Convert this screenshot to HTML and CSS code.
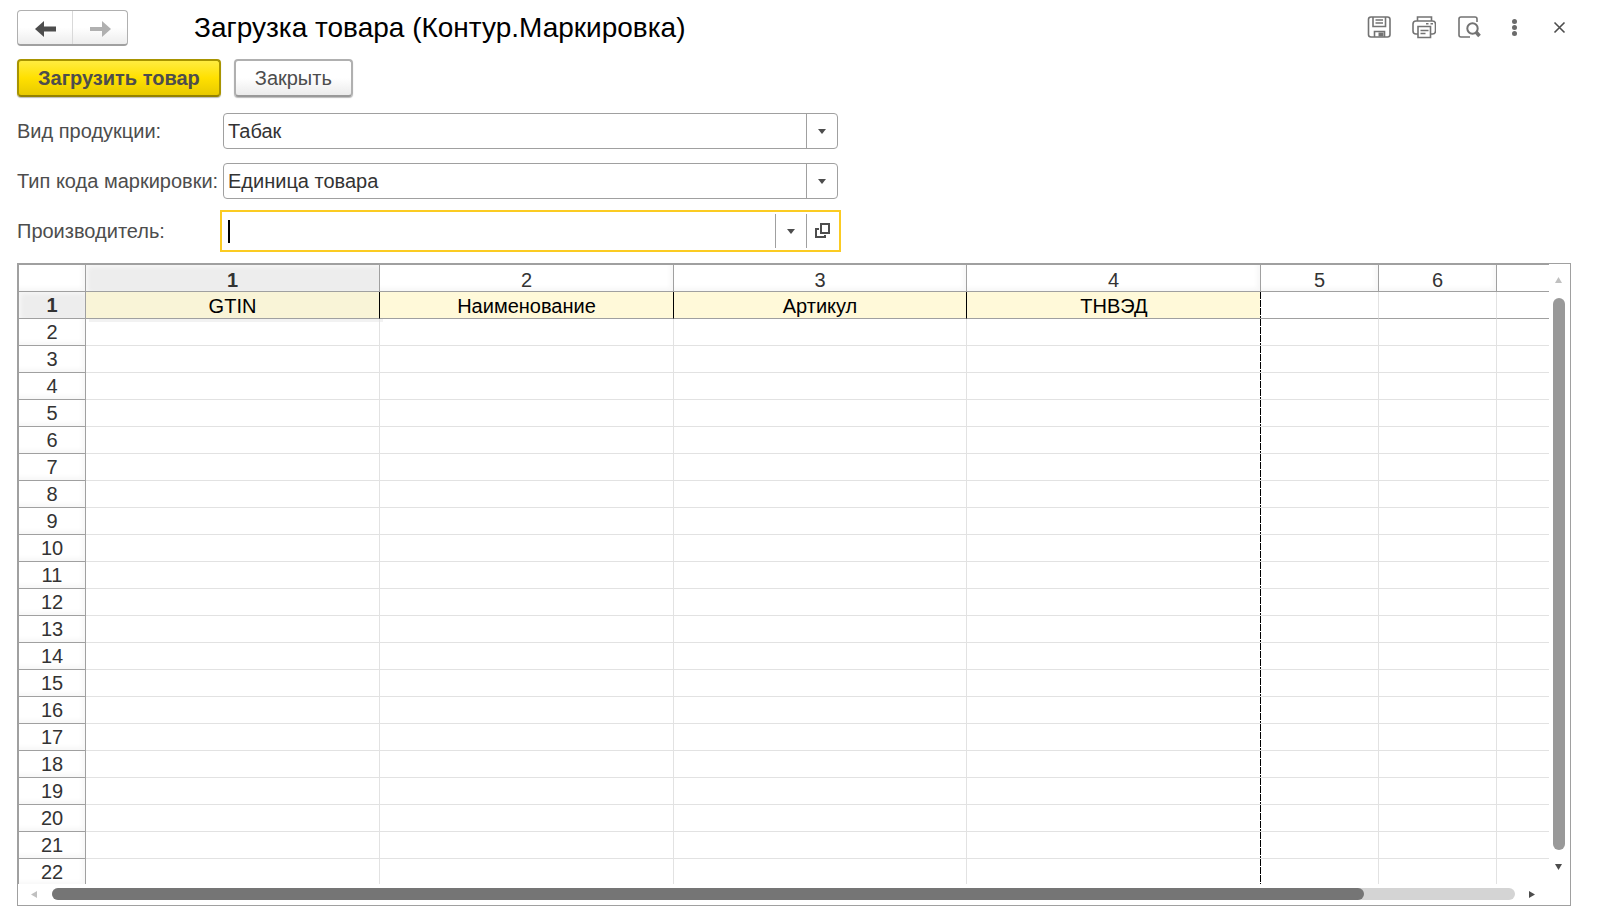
FILE: index.html
```html
<!DOCTYPE html>
<html lang="ru">
<head>
<meta charset="utf-8">
<title>Загрузка товара (Контур.Маркировка)</title>
<link rel="stylesheet" href="styles.css">
</head>
<body>
<main class="window">
  <header class="titlebar">
    <div class="nav">
      <button class="nav-btn" type="button" aria-label="Назад"><svg width="22" height="16" viewBox="0 0 22 16"><path d="M1 8 10 0V5.500H22V10.500H10V16Z" fill="#4d4d4d"/></svg></button>
      <button class="nav-btn" type="button" aria-label="Вперед" disabled><svg width="22" height="16" viewBox="0 0 22 16"><path d="M22 8 13 0V6H1V10H13V16Z" fill="#b0b0b0"/></svg></button>
    </div>
    <h1 class="title">Загрузка товара (Контур.Маркировка)</h1>
    <div class="tools">
      <button class="tool" type="button" aria-label="Сохранить"><svg width="24" height="24" viewBox="0 0 24 24" fill="none" stroke="#737373" stroke-width="1.600"><rect x="1.500" y="1" width="21.500" height="20" rx="2.500"/><path d="M6 1V10.500H18.500V1M8.500 4H16M8.500 7H16M7.500 21V15.500H17.500V21"/><path d="M11.500 16.500H16.500V20.500H11.500Z" fill="#737373" stroke="none"/></svg></button>
      <button class="tool" type="button" aria-label="Печать"><svg width="24" height="24" viewBox="0 0 24 24" fill="none" stroke="#737373" stroke-width="1.600"><path d="M5.500 5V1H19.500V5M5.500 18H4Q1 18 1 15V8Q1 5 4 5H20.500Q23.500 5 23.500 8V15Q23.500 18 20.500 18H19M6 10.500H18.500V21.500H6ZM8.500 14.500H16.500M8.500 17.500H13.500M14 7.700H16.500M18.500 7.700H21"/></svg></button>
      <button class="tool" type="button" aria-label="Просмотр"><svg width="24" height="24" viewBox="0 0 24 24" fill="none" stroke="#737373" stroke-width="1.600"><path d="M20 6V3Q20 1 18 1H4Q2 1 2 3V19Q2 21 4 21H13"/><circle cx="15.500" cy="12.500" r="5.200" stroke-width="2"/><path d="M19 16 22.500 20" stroke-width="3.500"/></svg></button>
      <button class="tool" type="button" aria-label="Ещё"><svg width="24" height="24" viewBox="0 0 24 24" fill="#6b6b6b"><circle cx="12.500" cy="5.500" r="2.500"/><circle cx="12.500" cy="11.500" r="2.500"/><circle cx="12.500" cy="17.500" r="2.500"/></svg></button>
      <button class="tool" type="button" aria-label="Закрыть окно"><svg width="24" height="24" viewBox="0 0 24 24" stroke="#4d4d4d" stroke-width="1.600"><path d="M7.500 6.500 17.500 16.500M17.500 6.500 7.500 16.500"/></svg></button>
    </div>
  </header>

  <div class="commands">
    <button class="btn btn-primary" type="button">Загрузить товар</button>
    <button class="btn" type="button">Закрыть</button>
  </div>

  <form class="fields">
    <label for="kind">Вид продукции:</label>
    <div class="field">
      <select id="kind"><option>Табак</option></select>
      <span class="drop"><svg width="8" height="5" viewBox="0 0 8 5"><path d="M0 0H8L4 5Z" fill="#4d4d4d"/></svg></span>
    </div>
    <label for="code">Тип кода маркировки:</label>
    <div class="field">
      <select id="code"><option>Единица товара</option></select>
      <span class="drop"><svg width="8" height="5" viewBox="0 0 8 5"><path d="M0 0H8L4 5Z" fill="#4d4d4d"/></svg></span>
    </div>
    <label for="maker">Производитель:</label>
    <div class="field field-active">
      <span class="caret"></span>
      <input id="maker" type="text">
      <button class="field-btn" type="button" aria-label="Выбрать"><svg width="8" height="5" viewBox="0 0 8 5"><path d="M0 0H8L4 5Z" fill="#4d4d4d"/></svg></button>
      <button class="field-btn" type="button" aria-label="Открыть"><svg width="16" height="16" viewBox="0 0 16 16" fill="none" stroke="#4d4d4d" stroke-width="2"><path d="M7 1H15V10H7ZM5 6H2V14H11V12"/></svg></button>
    </div>
  </form>

  <section class="frame">
    <div class="sheet">
      <table class="grid">
        <colgroup><col class="c-num"><col class="c-wide"><col class="c-wide"><col class="c-third"><col class="c-wide"><col class="c-std"><col class="c-std"><col></colgroup>
        <thead>
          <tr><th></th><th class="current">1</th><th>2</th><th>3</th><th>4</th><th>5</th><th>6</th><th></th></tr>
        </thead>
        <tbody>
          <tr class="names"><th class="current">1</th><td class="name selected">GTIN</td><td class="name">Наименование</td><td class="name">Артикул</td><td class="name">ТНВЭД</td><td></td><td></td><td></td></tr>
          <tr><th>2</th><td></td><td></td><td></td><td></td><td></td><td></td><td></td></tr>
          <tr><th>3</th><td></td><td></td><td></td><td></td><td></td><td></td><td></td></tr>
          <tr><th>4</th><td></td><td></td><td></td><td></td><td></td><td></td><td></td></tr>
          <tr><th>5</th><td></td><td></td><td></td><td></td><td></td><td></td><td></td></tr>
          <tr><th>6</th><td></td><td></td><td></td><td></td><td></td><td></td><td></td></tr>
          <tr><th>7</th><td></td><td></td><td></td><td></td><td></td><td></td><td></td></tr>
          <tr><th>8</th><td></td><td></td><td></td><td></td><td></td><td></td><td></td></tr>
          <tr><th>9</th><td></td><td></td><td></td><td></td><td></td><td></td><td></td></tr>
          <tr><th>10</th><td></td><td></td><td></td><td></td><td></td><td></td><td></td></tr>
          <tr><th>11</th><td></td><td></td><td></td><td></td><td></td><td></td><td></td></tr>
          <tr><th>12</th><td></td><td></td><td></td><td></td><td></td><td></td><td></td></tr>
          <tr><th>13</th><td></td><td></td><td></td><td></td><td></td><td></td><td></td></tr>
          <tr><th>14</th><td></td><td></td><td></td><td></td><td></td><td></td><td></td></tr>
          <tr><th>15</th><td></td><td></td><td></td><td></td><td></td><td></td><td></td></tr>
          <tr><th>16</th><td></td><td></td><td></td><td></td><td></td><td></td><td></td></tr>
          <tr><th>17</th><td></td><td></td><td></td><td></td><td></td><td></td><td></td></tr>
          <tr><th>18</th><td></td><td></td><td></td><td></td><td></td><td></td><td></td></tr>
          <tr><th>19</th><td></td><td></td><td></td><td></td><td></td><td></td><td></td></tr>
          <tr><th>20</th><td></td><td></td><td></td><td></td><td></td><td></td><td></td></tr>
          <tr><th>21</th><td></td><td></td><td></td><td></td><td></td><td></td><td></td></tr>
          <tr><th>22</th><td></td><td></td><td></td><td></td><td></td><td></td><td></td></tr>
        </tbody>
      </table>
    </div>
    <div class="vbar">
      <svg width="7" height="6" viewBox="0 0 7 6"><path d="M0 6H7L3.500 0Z" fill="#c0c0c0"/></svg>
      <div class="vtrack"></div>
      <svg width="7" height="6" viewBox="0 0 7 6"><path d="M0 0H7L3.500 6Z" fill="#4d4d4d"/></svg>
    </div>
    <div class="hbar">
      <svg width="6" height="7" viewBox="0 0 6 7"><path d="M6 0V7L0 3.500Z" fill="#c0c0c0"/></svg>
      <div class="htrack"><div class="hthumb" style="width: 89.7%"></div></div>
      <svg width="6" height="7" viewBox="0 0 6 7"><path d="M0 0V7L6 3.500Z" fill="#4d4d4d"/></svg>
    </div>
  </section>
</main>
</body>
</html>
```
FILE: styles.css
```css
* { box-sizing: border-box; }

body {
  margin: 0;
  background: #fff;
  color: #333;
  font-family: "Liberation Sans", Arial, sans-serif;
  font-size: 20px;
}

button, input, select { font: inherit; color: inherit; }
svg { display: block; flex: none; }

.window {
  display: flex;
  flex-direction: column;
  height: 100vh;
  padding: 10px 28px 17px 17px;
}

/* Title bar */
.titlebar { display: flex; align-items: center; height: 36px; }
.nav {
  display: flex;
  width: 111px;
  height: 36px;
  border: 1px solid #b0b0b0;
  border-bottom: 2px solid #a0a0a0;
  border-radius: 4px;
  background: linear-gradient(#fff 50%, #ededed);
}
.nav-btn {
  flex: 1;
  display: flex;
  align-items: center;
  justify-content: center;
  padding: 2px 0 0;
  border: 0;
  background: none;
}
.nav-btn + .nav-btn { border-left: 1px solid #d9d9d9; }
.title {
  flex: 1;
  margin: 0 0 0 66px;
  color: #000;
  font-size: 28px;
  font-weight: 400;
  line-height: 36px;
}
.tools { display: flex; gap: 21px; }
.tool { padding: 0; border: 0; background: none; }

/* Commands */
.commands { display: flex; gap: 13px; margin-top: 13px; }
.btn {
  height: 38px;
  padding: 0 19px;
  border: 2px solid #b0b0b0;
  border-bottom-color: #999;
  border-radius: 4px;
  background: linear-gradient(#fff 50%, #ebebeb);
  box-shadow: 0 1px 1px #bbb;
  color: #4d4d4d;
}
.btn-primary {
  border-color: #a89400;
  border-bottom-color: #948200;
  background: linear-gradient(#ffec40, #ffe000 50%, #e8ca00);
  font-weight: 700;
}

/* Fields */
.fields {
  display: grid;
  grid-template-columns: 206px minmax(0, 615px);
  row-gap: 14px;
  align-items: center;
  margin-top: 16px;
  color: #4d4d4d;
}
.fields label { white-space: nowrap; }
.field {
  display: flex;
  align-items: stretch;
  height: 36px;
  border: 1px solid #a0a0a0;
  border-radius: 4px;
  color: #333;
}
.field select, .field input {
  flex: 1;
  min-width: 0;
  padding: 0 4px;
  border: 0;
  outline: 0;
  background: none;
  appearance: none;
}
.drop, .field-btn {
  display: flex;
  align-items: center;
  justify-content: center;
  width: 31px;
  padding: 0;
  border: 0;
  border-left: 1px solid #a0a0a0;
  background: none;
}
.field-active {
  border-color: transparent;
  border-radius: 0;
  outline: 2px solid #fbcb22;
  outline-offset: 1px;
}
.caret { align-self: center; width: 2px; height: 23px; margin-left: 4px; background: #000; }

/* Spreadsheet */
.frame {
  flex: 1;
  min-height: 0;
  display: grid;
  grid-template-columns: minmax(0, 1fr) 21px;
  grid-template-rows: minmax(0, 1fr) 21px;
  margin-top: 14px;
  border: 1px solid #a0a0a0;
}
.sheet { overflow: hidden; border-top: 1px solid #a0a0a0; border-left: 1px solid #a0a0a0; }
.grid { width: 100%; table-layout: fixed; border-collapse: separate; border-spacing: 0; }
.c-num { width: 67px; }
.c-wide { width: 294px; }
.c-third { width: 293px; }
.c-std { width: 118px; }
.grid th, .grid td {
  height: 27px;
  padding: 0;
  border: 0 solid #e2e2e2;
  border-width: 0 1px 1px 0;
  font-weight: 400;
  line-height: 26px;
  text-align: center;
}
.grid th {
  border-color: #a0a0a0;
  box-shadow: inset -3px -3px 4px #f7f7f7;
}
.grid thead th { padding-top: 4px; line-height: 22px; }
.grid .current { background: #ededed; box-shadow: inset 2px 2px 4px #f7f7f7; font-weight: 700; }
.grid .names td { padding-top: 2px; border-bottom-color: #a0a0a0; color: #000; line-height: 24px; }
.grid .names .name { border-right-color: #000; background-color: #fff9d9; }
.grid .names .selected { background-color: #f9f4d7; box-shadow: 3px 3px 0 #f2f2f2; }
.grid tr > :last-child { border-right: 0; box-shadow: none; }
/* Right edge of the print area */
.grid td:nth-child(5), .grid .names .name:nth-child(5) {
  border-right: 0;
  background-image: repeating-linear-gradient(#000 0 7px, #fff 7px 8px);
  background-position: right top;
  background-repeat: no-repeat;
  background-size: 1px 100%;
}

/* Scroll bars */
.vbar { display: flex; flex-direction: column; align-items: center; padding: 13px 2px 14px 0; }
.vtrack { flex: 1; width: 12px; margin: 15px 0 14px; border-radius: 6px; background: #999; }
.hbar { display: flex; align-items: center; padding: 0 14px 1px 13px; }
.htrack { flex: 1; height: 12px; margin: 0 14px 0 15px; border-radius: 6px; background: #d4d4d4; }
.hthumb { height: 12px; border-radius: 6px; background: #757575; }
```
